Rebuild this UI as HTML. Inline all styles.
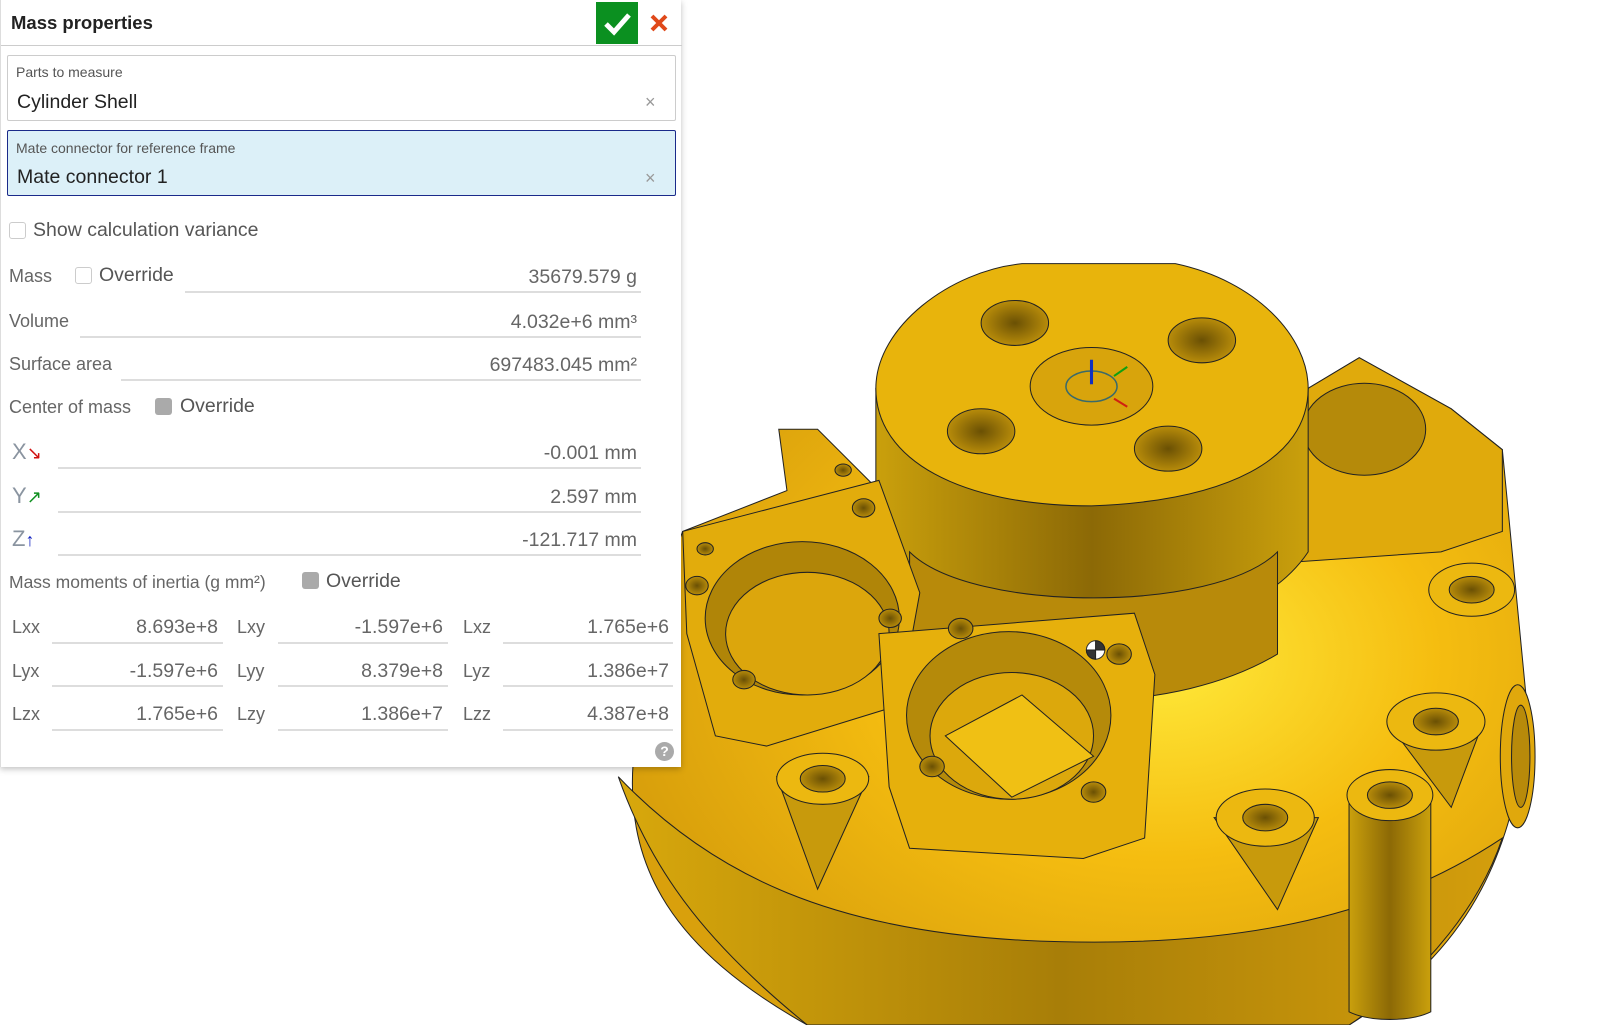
<!DOCTYPE html>
<html><head><meta charset="utf-8"><style>
*{margin:0;padding:0;box-sizing:border-box}
body{width:1600px;height:1025px;background:#fff;overflow:hidden;position:relative;font-family:"Liberation Sans",sans-serif;color:#555}
#scene{position:absolute;left:0;top:0}
#panel{position:absolute;left:0;top:0;width:681px;height:767px;background:#fff;border-left:1px solid #ddd;box-shadow:0 2px 6px rgba(0,0,0,.25)}
.a{position:absolute;white-space:nowrap}
.hd{left:10px;top:12px;font-size:18.5px;font-weight:bold;color:#222}
.hline{position:absolute;left:0;top:45px;width:681px;height:1px;background:#ccc}
.ok{position:absolute;left:595px;top:2px;width:42px;height:42px;background:#0b9020}
.box{position:absolute;left:6px;width:669px;height:66px;border:1px solid #ccc;border-radius:2px}
.lbl{font-size:14px;color:#555}
.val{font-size:19.5px;color:#222}
.x{font-size:18px;color:#999}
.t{font-size:18px;color:#666}
.v{font-size:19.5px;color:#666;text-align:right}
.ln{position:absolute;height:2px;background:#ddd}
.cb{position:absolute;width:17px;height:17px;border:1px solid #ccc;border-radius:3px;background:#fff}
.cbg{position:absolute;width:17px;height:17px;border-radius:3px;background:#aaa}
</style></head><body>
<svg id="scene" width="1600" height="1025" viewBox="0 0 1600 1025">
<defs>
<radialGradient id="gb" cx="0.6" cy="0.45" r="0.6"><stop offset="0" stop-color="#ffea3a"/><stop offset="0.5" stop-color="#f5bd10"/><stop offset="1" stop-color="#d9a00c"/></radialGradient>
<linearGradient id="gs" x1="0" x2="1"><stop offset="0" stop-color="#d8a80c"/><stop offset="0.5" stop-color="#a87e08"/><stop offset="1" stop-color="#d49e0c"/></linearGradient>
<linearGradient id="gc" x1="0" x2="1"><stop offset="0" stop-color="#caa00c"/><stop offset="0.5" stop-color="#8c6906"/><stop offset="1" stop-color="#caa00c"/></linearGradient>
<radialGradient id="gh"><stop offset="0" stop-color="#6a5004"/><stop offset="1" stop-color="#b88c0a"/></radialGradient>
</defs>
<g transform="scale(1.022)" stroke="#222" stroke-width="1">
<path d="M620,740 C610,850 660,930 790,1003 L1320,1003 C1420,940 1480,860 1495,700 L1470,440 L1420,400 L1330,350 L1280,380 L1250,520 L880,500 L800,420 L762,420 L770,480 L668,520 L600,700 Z" fill="url(#gb)"/>
<path d="M605,760 C640,860 700,930 790,1003 L1320,1003 C1400,950 1450,880 1470,820 C1350,900 1200,930 1000,920 C820,910 700,860 605,760Z" fill="url(#gs)"/>
<path d="M1280,380 L1330,350 L1420,400 L1470,440 L1470,520 L1410,540 L1265,550 L1250,520 Z" fill="#e0aa0c"/>
<ellipse cx="1335" cy="420" rx="60" ry="45" fill="#b58a0a"/>
<path d="M857,380 L857,560 C900,610 1000,625 1068,620 C1150,620 1240,600 1280,540 L1280,380 Z" fill="url(#gc)"/>
<path d="M890,540 C950,600 1190,600 1250,540 L1250,640 C1150,700 980,700 890,640Z" fill="#b88a0a"/>
<path d="M857,380 C857,320 930,265 1000,258 L1150,258 C1230,275 1280,330 1280,380 C1280,450 1200,490 1068,495 C940,495 857,450 857,380Z" fill="#e8b40c"/>
<ellipse cx="993" cy="316" rx="33" ry="22" fill="url(#gh)"/>
<ellipse cx="1176" cy="333" rx="33" ry="22" fill="url(#gh)"/>
<ellipse cx="960" cy="422" rx="33" ry="22" fill="url(#gh)"/>
<ellipse cx="1143" cy="439" rx="33" ry="22" fill="url(#gh)"/>
<ellipse cx="1068" cy="378" rx="60" ry="38" fill="#d8a40c"/>
<ellipse cx="1068" cy="378" rx="25" ry="15" fill="none" stroke="#3a6a6a" stroke-width="1.5"/>
<line x1="1068" y1="352" x2="1068" y2="376" stroke="#1030c0" stroke-width="3"/>
<line x1="1090" y1="368" x2="1103" y2="359" stroke="#10a010" stroke-width="2"/>
<line x1="1090" y1="390" x2="1103" y2="398" stroke="#d02010" stroke-width="2"/>
<path d="M668,520 L860,470 L900,580 L880,690 L750,730 L700,720 L672,620 Z" fill="#e2ac0c"/>
<ellipse cx="785" cy="605" rx="95" ry="75" fill="#b08508"/>
<ellipse cx="790" cy="620" rx="80" ry="60" fill="#dca60c"/>
<path d="M860,620 L1110,600 L1130,660 L1120,820 L1060,840 L890,830 L870,770 Z" fill="#e6b00c"/>
<ellipse cx="987" cy="700" rx="100" ry="82" fill="#b58a0a"/>
<ellipse cx="990" cy="720" rx="80" ry="62" fill="#dca80c"/>
<path d="M925,720 L1000,680 L1070,740 L990,780 Z" fill="#f0c014"/>
<g fill="url(#gh)">
<ellipse cx="940" cy="615" rx="12" ry="10"/><ellipse cx="1095" cy="640" rx="12" ry="10"/>
<ellipse cx="912" cy="750" rx="12" ry="10"/><ellipse cx="1070" cy="775" rx="12" ry="10"/>
<ellipse cx="845" cy="497" rx="11" ry="9"/><ellipse cx="682" cy="573" rx="11" ry="9"/>
<ellipse cx="728" cy="665" rx="11" ry="9"/><ellipse cx="871" cy="605" rx="11" ry="9"/>
<ellipse cx="825" cy="460" rx="8" ry="6"/><ellipse cx="690" cy="537" rx="8" ry="6"/>
</g>
<g>
<path d="M760,760 L800,870 L850,760 Z" fill="#c89a0c"/><ellipse cx="805" cy="762" rx="45" ry="25" fill="#ecb810"/><ellipse cx="805" cy="762" rx="22" ry="13" fill="url(#gh)"/>
<path d="M1188,800 L1250,890 L1290,800 Z" fill="#c89a0c"/><ellipse cx="1238" cy="800" rx="48" ry="28" fill="#ecb810"/><ellipse cx="1238" cy="800" rx="22" ry="13" fill="url(#gh)"/>
<path d="M1320,780 L1320,990 C1340,1000 1380,1000 1400,990 L1400,780 Z" fill="url(#gc)"/><ellipse cx="1360" cy="778" rx="42" ry="25" fill="#ecb810"/><ellipse cx="1360" cy="778" rx="22" ry="13" fill="url(#gh)"/>
<path d="M1360,710 L1420,790 L1450,710 Z" fill="#c89a0c"/><ellipse cx="1405" cy="706" rx="48" ry="28" fill="#ecb810"/><ellipse cx="1405" cy="706" rx="22" ry="13" fill="url(#gh)"/>
<ellipse cx="1440" cy="577" rx="42" ry="26" fill="#ecb810"/><ellipse cx="1440" cy="577" rx="22" ry="13" fill="url(#gh)"/>
<ellipse cx="1485" cy="740" rx="17" ry="70" fill="#e0a80c"/><ellipse cx="1488" cy="740" rx="9" ry="50" fill="#b88a0a"/>
</g>
<circle cx="1072" cy="636" r="9" fill="#fff" stroke="#333"/>
<path d="M1072,627 A9,9 0 0 1 1081,636 L1072,636Z M1072,645 A9,9 0 0 1 1063,636 L1072,636Z" fill="#333"/>
</g>
</svg>
<div id="panel">
<div class="a hd">Mass properties</div>
<div class="hline"></div>
<div class="ok"><svg width="42" height="42"><path d="M10,22 L18,30 L33,13" fill="none" stroke="#fff" stroke-width="5"/></svg></div>
<svg class="a" style="left:648px;top:13px" width="20" height="20"><path d="M3,3 L17,17 M17,3 L3,17" stroke="#e0491a" stroke-width="4"/></svg>
<div class="box" style="top:55px"></div>
<div class="a lbl" style="left:15px;top:64px">Parts to measure</div>
<div class="a val" style="left:16px;top:91px">Cylinder Shell</div>
<div class="a x" style="left:644px;top:92px">×</div>
<div class="box" style="top:130px;background:#dcf0f8;border:1.5px solid #1a2a8a"></div>
<div class="a lbl" style="left:15px;top:140px">Mate connector for reference frame</div>
<div class="a val" style="left:16px;top:166px">Mate connector 1</div>
<div class="a x" style="left:644px;top:168px">×</div>
<div class="cb" style="left:8px;top:222px"></div>
<div class="a" style="left:32px;top:219px;font-size:19.5px;color:#555">Show calculation variance</div>
<div class="a t" style="left:8px;top:266px">Mass</div>
<div class="cb" style="left:74px;top:267px"></div>
<div class="a" style="left:98px;top:264px;font-size:19.5px;color:#555">Override</div>
<div class="ln" style="left:184px;top:291px;width:456px"></div>
<div class="a v" style="right:44px;top:266px">35679.579 g</div>
<div class="a t" style="left:8px;top:311px">Volume</div>
<div class="ln" style="left:79px;top:336px;width:561px"></div>
<div class="a v" style="right:44px;top:311px">4.032e+6 mm³</div>
<div class="a t" style="left:8px;top:354px">Surface area</div>
<div class="ln" style="left:120px;top:379px;width:520px"></div>
<div class="a v" style="right:44px;top:354px">697483.045 mm²</div>
<div class="a t" style="left:8px;top:397px">Center of mass</div>
<div class="cbg" style="left:154px;top:398px"></div>
<div class="a" style="left:179px;top:395px;font-size:19.5px;color:#555">Override</div>
<div class="a" style="left:11px;top:439px;font-size:22px;color:#8a94a0">X<span style="color:#d01010;font-size:18px">↘</span></div>
<div class="ln" style="left:57px;top:467px;width:583px"></div>
<div class="a v" style="right:44px;top:442px">-0.001 mm</div>
<div class="a" style="left:11px;top:483px;font-size:22px;color:#8a94a0">Y<span style="color:#109020;font-size:18px">↗</span></div>
<div class="ln" style="left:57px;top:511px;width:583px"></div>
<div class="a v" style="right:44px;top:486px">2.597 mm</div>
<div class="a" style="left:11px;top:526px;font-size:22px;color:#8a94a0">Z<span style="color:#1020c0;font-size:18px">↑</span></div>
<div class="ln" style="left:57px;top:554px;width:583px"></div>
<div class="a v" style="right:44px;top:529px">-121.717 mm</div>
<div class="a t" style="left:8px;top:572px;font-size:17.5px">Mass moments of inertia (g mm²)</div>
<div class="cbg" style="left:301px;top:572px"></div>
<div class="a" style="left:325px;top:570px;font-size:19.5px;color:#555">Override</div>

<div class="a t" style="left:11px;top:617px">Lxx</div><div class="ln" style="left:51px;top:642px;width:171px"></div><div class="a v" style="right:463px;top:616px">8.693e+8</div>
<div class="a t" style="left:236px;top:617px">Lxy</div><div class="ln" style="left:277px;top:642px;width:170px"></div><div class="a v" style="right:238px;top:616px">-1.597e+6</div>
<div class="a t" style="left:462px;top:617px">Lxz</div><div class="ln" style="left:502px;top:642px;width:170px"></div><div class="a v" style="right:12px;top:616px">1.765e+6</div>

<div class="a t" style="left:11px;top:661px">Lyx</div><div class="ln" style="left:51px;top:685px;width:171px"></div><div class="a v" style="right:463px;top:660px">-1.597e+6</div>
<div class="a t" style="left:236px;top:661px">Lyy</div><div class="ln" style="left:277px;top:685px;width:170px"></div><div class="a v" style="right:238px;top:660px">8.379e+8</div>
<div class="a t" style="left:462px;top:661px">Lyz</div><div class="ln" style="left:502px;top:685px;width:170px"></div><div class="a v" style="right:12px;top:660px">1.386e+7</div>

<div class="a t" style="left:11px;top:704px">Lzx</div><div class="ln" style="left:51px;top:729px;width:171px"></div><div class="a v" style="right:463px;top:703px">1.765e+6</div>
<div class="a t" style="left:236px;top:704px">Lzy</div><div class="ln" style="left:277px;top:729px;width:170px"></div><div class="a v" style="right:238px;top:703px">1.386e+7</div>
<div class="a t" style="left:462px;top:704px">Lzz</div><div class="ln" style="left:502px;top:729px;width:170px"></div><div class="a v" style="right:12px;top:703px">4.387e+8</div>

<div class="a" style="left:654px;top:742px;width:19px;height:19px;border-radius:50%;background:#aaa;color:#fff;font-size:14px;font-weight:bold;text-align:center;line-height:19px">?</div>
</div>
</body></html>
